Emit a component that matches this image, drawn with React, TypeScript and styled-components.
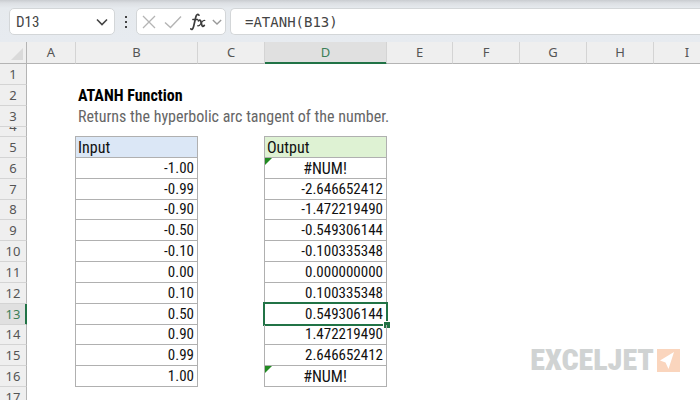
import React from "react";
import styled, { createGlobalStyle } from "styled-components";

const GlobalStyle = createGlobalStyle`
  * { box-sizing: border-box; }
  body { margin: 0; background: #fff; }
`;

const UI = `"Noto Sans", "Open Sans", sans-serif`;
const SHEET = `"Roboto Condensed", Roboto, sans-serif`;

const Window = styled.main`
  position: relative;
  height: 100vh;
  overflow: hidden;
  background: #fff;
  font-family: ${UI};
`;

const FormulaBar = styled.header`
  display: flex;
  height: 42px;
  padding: 8px 0 0 9px;
  background: linear-gradient(#c9ccd0, #dcdfe3 3px, #e6eaee 8px, #e7ebf0);
`;

const Field = styled.div`
  display: flex;
  align-items: center;
  height: 27px;
  background: #fff;
  border: 1px solid #d3d6d8;
  border-radius: 5px;
`;

const NameBox = styled(Field)`
  width: 106px;
  padding: 0 6px;
`;

const NameInput = styled.input`
  flex: 1;
  min-width: 0;
  padding: 0;
  border: 0;
  outline: 0;
  background: none;
  color: #444;
  font: 15px ${SHEET};
`;

const IconButton = styled.button`
  display: flex;
  padding: 0 2px;
  border: 0;
  background: none;
`;

const MenuButton = styled(IconButton)`
  padding: 0;
`;

const Grip = styled.div`
  display: flex;
  flex-direction: column;
  align-items: center;
  justify-content: center;
  gap: 3px;
  width: 21px;
  height: 27px;
`;

const Dot = styled.span`
  width: 2px;
  height: 2px;
  background: #444;
`;

const Actions = styled(Field)`
  gap: 4px;
  width: 90px;
  padding-left: 3px;
  margin-right: 4px;
`;

const FormulaField = styled(Field)`
  flex: 1;
  border-right: 0;
  border-radius: 5px 0 0 5px;
  padding-left: 14px;
`;

const FormulaInput = styled.input`
  width: 100%;
  padding: 0;
  border: 0;
  outline: 0;
  background: none;
  color: #444;
  font: 14px "DejaVu Sans Mono", monospace;
`;

const Sheet = styled.table`
  width: 100%;
  min-width: 721px;
  table-layout: fixed;
  border-collapse: separate;
  border-spacing: 0;
`;

const Col = styled.col<{ $w?: number }>`
  width: ${(p) => (p.$w ? `${p.$w}px` : "auto")};
`;

const Line = styled.tr<{ $h: number }>`
  height: ${(p) => p.$h}px;
`;

const Head = styled.th<{ $active?: boolean }>`
  padding: 0;
  background: ${(p) => (p.$active ? "#e0e0e0" : "#efefef")};
  color: ${(p) => (p.$active ? "#3c7f57" : "#555")};
  font: 13px/19px ${UI};
`;

const ColHead = styled(Head)`
  border-right: 1px solid #d4d4d4;
  border-bottom: 1px solid ${(p) => (p.$active ? "#217346" : "#b4b4b4")};
  box-shadow: ${(p) => (p.$active ? "inset 0 -1px #217346" : "none")};
`;

const Corner = styled(ColHead)`
  border-right-color: #b4b4b4;
  svg { display: block; margin: 3px 0 0 11px; }
`;

const RowHead = styled(Head)`
  border-right: 1px solid ${(p) => (p.$active ? "#217346" : "#b4b4b4")};
  border-bottom: 1px solid #d4d4d4;
  box-shadow: ${(p) => (p.$active ? "inset -1px 0 #217346" : "none")};
`;

const Clip = styled.div`
  display: flex;
  align-items: flex-end;
  justify-content: center;
  height: 9px;
  overflow: hidden;
`;

const Cell = styled.td`
  padding: 0 0 0 2px;
  color: #666;
  font: 16px/19px ${SHEET};
  white-space: nowrap;
`;

const Title = styled(Cell)`
  color: #000;
  font-weight: 700;
`;

const LabelCell = styled.th<{ $fill: string }>`
  padding: 0 3px 0 2px;
  background: ${(p) => p.$fill};
  border-right: 1px solid #b0b0b0;
  border-bottom: 1px solid #b0b0b0;
  box-shadow: -1px 0 #b0b0b0, 0 -1px #b0b0b0, -1px -1px #b0b0b0;
  color: #111;
  font: 16px/19px ${SHEET};
  text-align: left;
`;

const DataCell = styled(Cell)<{ $error?: boolean }>`
  position: relative;
  padding: 0 3px 0 2px;
  border-right: 1px solid #b0b0b0;
  border-bottom: 1px solid #b0b0b0;
  box-shadow: -1px 0 #b0b0b0;
  color: #111;
  font-size: ${(p) => (p.$error ? 16 : 15)}px;
  text-align: ${(p) => (p.$error ? "center" : "right")};
`;

const Selection = styled.span`
  position: absolute;
  inset: -2px;
  border: 2px solid #217346;
  &::after {
    content: "";
    position: absolute;
    right: -4px;
    bottom: -4px;
    width: 6px;
    height: 6px;
    background: #217346;
    border: 1px solid #fff;
    border-width: 1px 0 0 1px;
  }
`;

const ErrorFlag = styled.span`
  position: absolute;
  top: 0;
  left: 0;
  border-top: 7px solid #218a21;
  border-right: 7px solid transparent;
`;

const Logo = styled.div`
  position: absolute;
  right: 20px;
  bottom: 20px;
  display: flex;
  align-items: center;
  gap: 3px;
  color: #d0d3d3;
  font: 900 30px/40px ${SHEET};
`;

const Chevron = ({ color, size }: { color: string; size: number }) => (
  <svg width={size} height="8" viewBox="0 0 12 8" fill="none" stroke={color} strokeWidth="1.6">
    <path d="M1 1.500 6 6.500l5-5" />
  </svg>
);

const COLUMNS: { name: string; w?: number }[] = [
  { name: "A", w: 49 },
  { name: "B", w: 122 },
  { name: "C", w: 67 },
  { name: "D", w: 122 },
  { name: "E", w: 66 },
  { name: "F", w: 67 },
  { name: "G", w: 67 },
  { name: "H", w: 67 },
  { name: "I" },
];

const DATA = [
  ["-1.00", "#NUM!"],
  ["-0.99", "-2.646652412"],
  ["-0.90", "-1.472219490"],
  ["-0.50", "-0.549306144"],
  ["-0.10", "-0.100335348"],
  ["0.00", "0.000000000"],
  ["0.10", "0.100335348"],
  ["0.50", "0.549306144"],
  ["0.90", "1.472219490"],
  ["0.99", "2.646652412"],
  ["1.00", "#NUM!"],
];

const FIRST_DATA_ROW = 6;
const ACTIVE_ROW = 13;

export default function App() {
  return (
    <Window>
      <GlobalStyle />
      <FormulaBar>
        <NameBox>
          <NameInput aria-label="Name box" defaultValue="D13" />
          <MenuButton aria-label="Open name list"><Chevron color="#444" size={12} /></MenuButton>
        </NameBox>
        <Grip><Dot /><Dot /><Dot /></Grip>
        <Actions>
          <IconButton aria-label="Cancel">
            <svg width="14" height="14" viewBox="0 0 14 14" stroke="#b4b4b4" strokeWidth="1.3"><path d="M1 1l12 12M13 1 1 13" /></svg>
          </IconButton>
          <IconButton aria-label="Enter">
            <svg width="18" height="14" viewBox="0 0 18 14" fill="none" stroke="#b4b4b4" strokeWidth="1.4"><path d="M1 7.500l5.500 5L17 1.500" /></svg>
          </IconButton>
          <IconButton aria-label="Insert function">
            <svg width="16" height="18" viewBox="0 0 16 18" fill="none" stroke="#3c3c3c" strokeLinecap="round">
              <path d="M9 2.200C7.600.6 6.400 1.600 5.800 4L3.600 13.500C3 16 1.900 17 .8 15.900" strokeWidth="1.700" />
              <path d="M2.800 6.500h4.800" strokeWidth="1.300" />
              <path d="M8.400 7.800c1.600-1.200 2.200-.4 2.600 1.300l.8 3c.4 1.400 1.200 1.700 2.500.3" strokeWidth="1.800" />
              <path d="M14.800 7.500c-2-.6-2.800 1.300-3.800 3s-1.800 3-3.400 2.300" strokeWidth="1.200" />
            </svg>
          </IconButton>
          <MenuButton aria-label="Function list"><Chevron color="#999" size={10} /></MenuButton>
        </Actions>
        <FormulaField>
          <FormulaInput aria-label="Formula" defaultValue="=ATANH(B13)" />
        </FormulaField>
      </FormulaBar>

      <Sheet>
        <colgroup>
          <Col $w={27} />
          {COLUMNS.map((c) => <Col key={c.name} $w={c.w} />)}
        </colgroup>
        <thead>
          <Line $h={22}>
            <Corner aria-label="Select all">
              <svg width="12" height="12" viewBox="0 0 12 12" fill="#dadada"><path d="M12 0v12H0z" /></svg>
            </Corner>
            {COLUMNS.map((c) => <ColHead key={c.name} scope="col" $active={c.name === "D"}>{c.name}</ColHead>)}
          </Line>
        </thead>
        <tbody>
          <Line $h={21}><RowHead scope="row">1</RowHead><Cell colSpan={9} /></Line>
          <Line $h={21}><RowHead scope="row">2</RowHead><Cell /><Title colSpan={8}>ATANH Function</Title></Line>
          <Line $h={21}>
            <RowHead scope="row">3</RowHead><Cell />
            <Cell colSpan={8}>Returns the hyperbolic arc tangent of the number.</Cell>
          </Line>
          <Line $h={10}><RowHead scope="row"><Clip>4</Clip></RowHead><Cell colSpan={9} /></Line>
          <Line $h={21}>
            <RowHead scope="row">5</RowHead><Cell />
            <LabelCell $fill="#dbe7f6">Input</LabelCell><Cell />
            <LabelCell $fill="#def2d3">Output</LabelCell>
          </Line>
          {DATA.map(([input, output], i) => {
            const n = i + FIRST_DATA_ROW;
            const isError = output === "#NUM!";
            return (
              <Line key={n} $h={n === 8 || n === 14 ? 20 : 21}>
                <RowHead scope="row" $active={n === ACTIVE_ROW}>{n}</RowHead><Cell />
                <DataCell>{input}</DataCell><Cell />
                <DataCell $error={isError}>
                  {isError && <ErrorFlag />}
                  {output}
                  {n === ACTIVE_ROW && <Selection />}
                </DataCell>
              </Line>
            );
          })}
          <Line $h={21}><RowHead scope="row">17</RowHead><Cell colSpan={9} /></Line>
        </tbody>
      </Sheet>

      <Logo>
        EXCELJET
        <svg width="23" height="23" viewBox="0 0 23 23"><path fill="#fad5bd" d="M0 0h23v23H0z" /><path fill="#fff" d="M17 3 3 11.500l5.500 2L11.500 20z" /></svg>
      </Logo>
    </Window>
  );
}
